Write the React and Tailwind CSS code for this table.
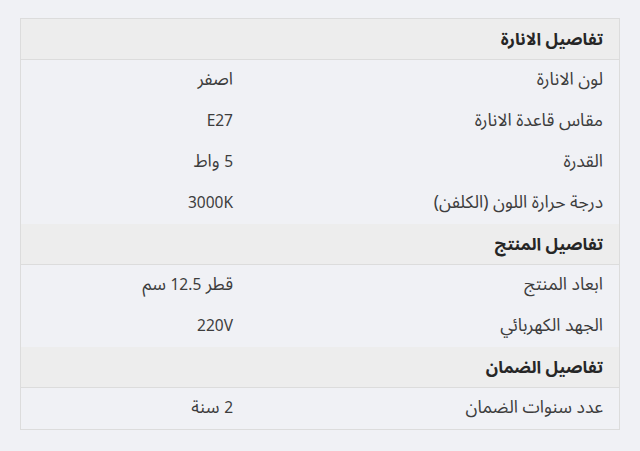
const sections = [
  {
    title: 'تفاصيل الانارة',
    rows: [
      ['لون الانارة', 'اصفر'],
      ['مقاس قاعدة الانارة', 'E27'],
      ['القدرة', '5 واط'],
      ['درجة حرارة اللون (الكلفن)', '3000K'],
    ],
  },
  {
    title: 'تفاصيل المنتج',
    rows: [
      ['ابعاد المنتج', 'قطر 12.5 سم'],
      ['الجهد الكهربائي', '220V'],
    ],
  },
  {
    title: 'تفاصيل الضمان',
    rows: [['عدد سنوات الضمان', '2 سنة']],
  },
];

// Latin runs (digits, units) use a smaller Latin face than the Arabic text
function Mixed({ text }) {
  const parts = text.split(/([0-9A-Za-z.]+)/);
  return parts.map((p, i) =>
    /[0-9A-Za-z]/.test(p) ? (
      <span key={i} className="font-['Noto_Sans',sans-serif] text-[15.5px]">{p}</span>
    ) : (
      <span key={i}>{p}</span>
    )
  );
}

export default function App() {
  return (
    <div
      dir="rtl"
      className="min-h-[451px] bg-[#f0f1f5] px-5 pt-[18px] text-[#3d3d3d] font-['Noto_Sans_Arabic','Noto_Sans',sans-serif]"
    >
      <div className="border border-[#dcdcdc]">
        {sections.map((s, i) => (
          <div key={i}>
            <div className="h-[41px] flex items-center px-4 pt-1 bg-[#ededed] border-b border-[#dcdcdc] text-[17px] font-bold text-[#262626]">
              {s.title}
            </div>
            {s.rows.map(([label, value], j) => (
              <div key={j} className="h-[41px] flex items-center text-[17.5px]">
                <div className="w-[370px] px-4">{label}</div>
                <div className="flex-1 px-4">
                  <Mixed text={value} />
                </div>
              </div>
            ))}
          </div>
        ))}
      </div>
    </div>
  );
}
